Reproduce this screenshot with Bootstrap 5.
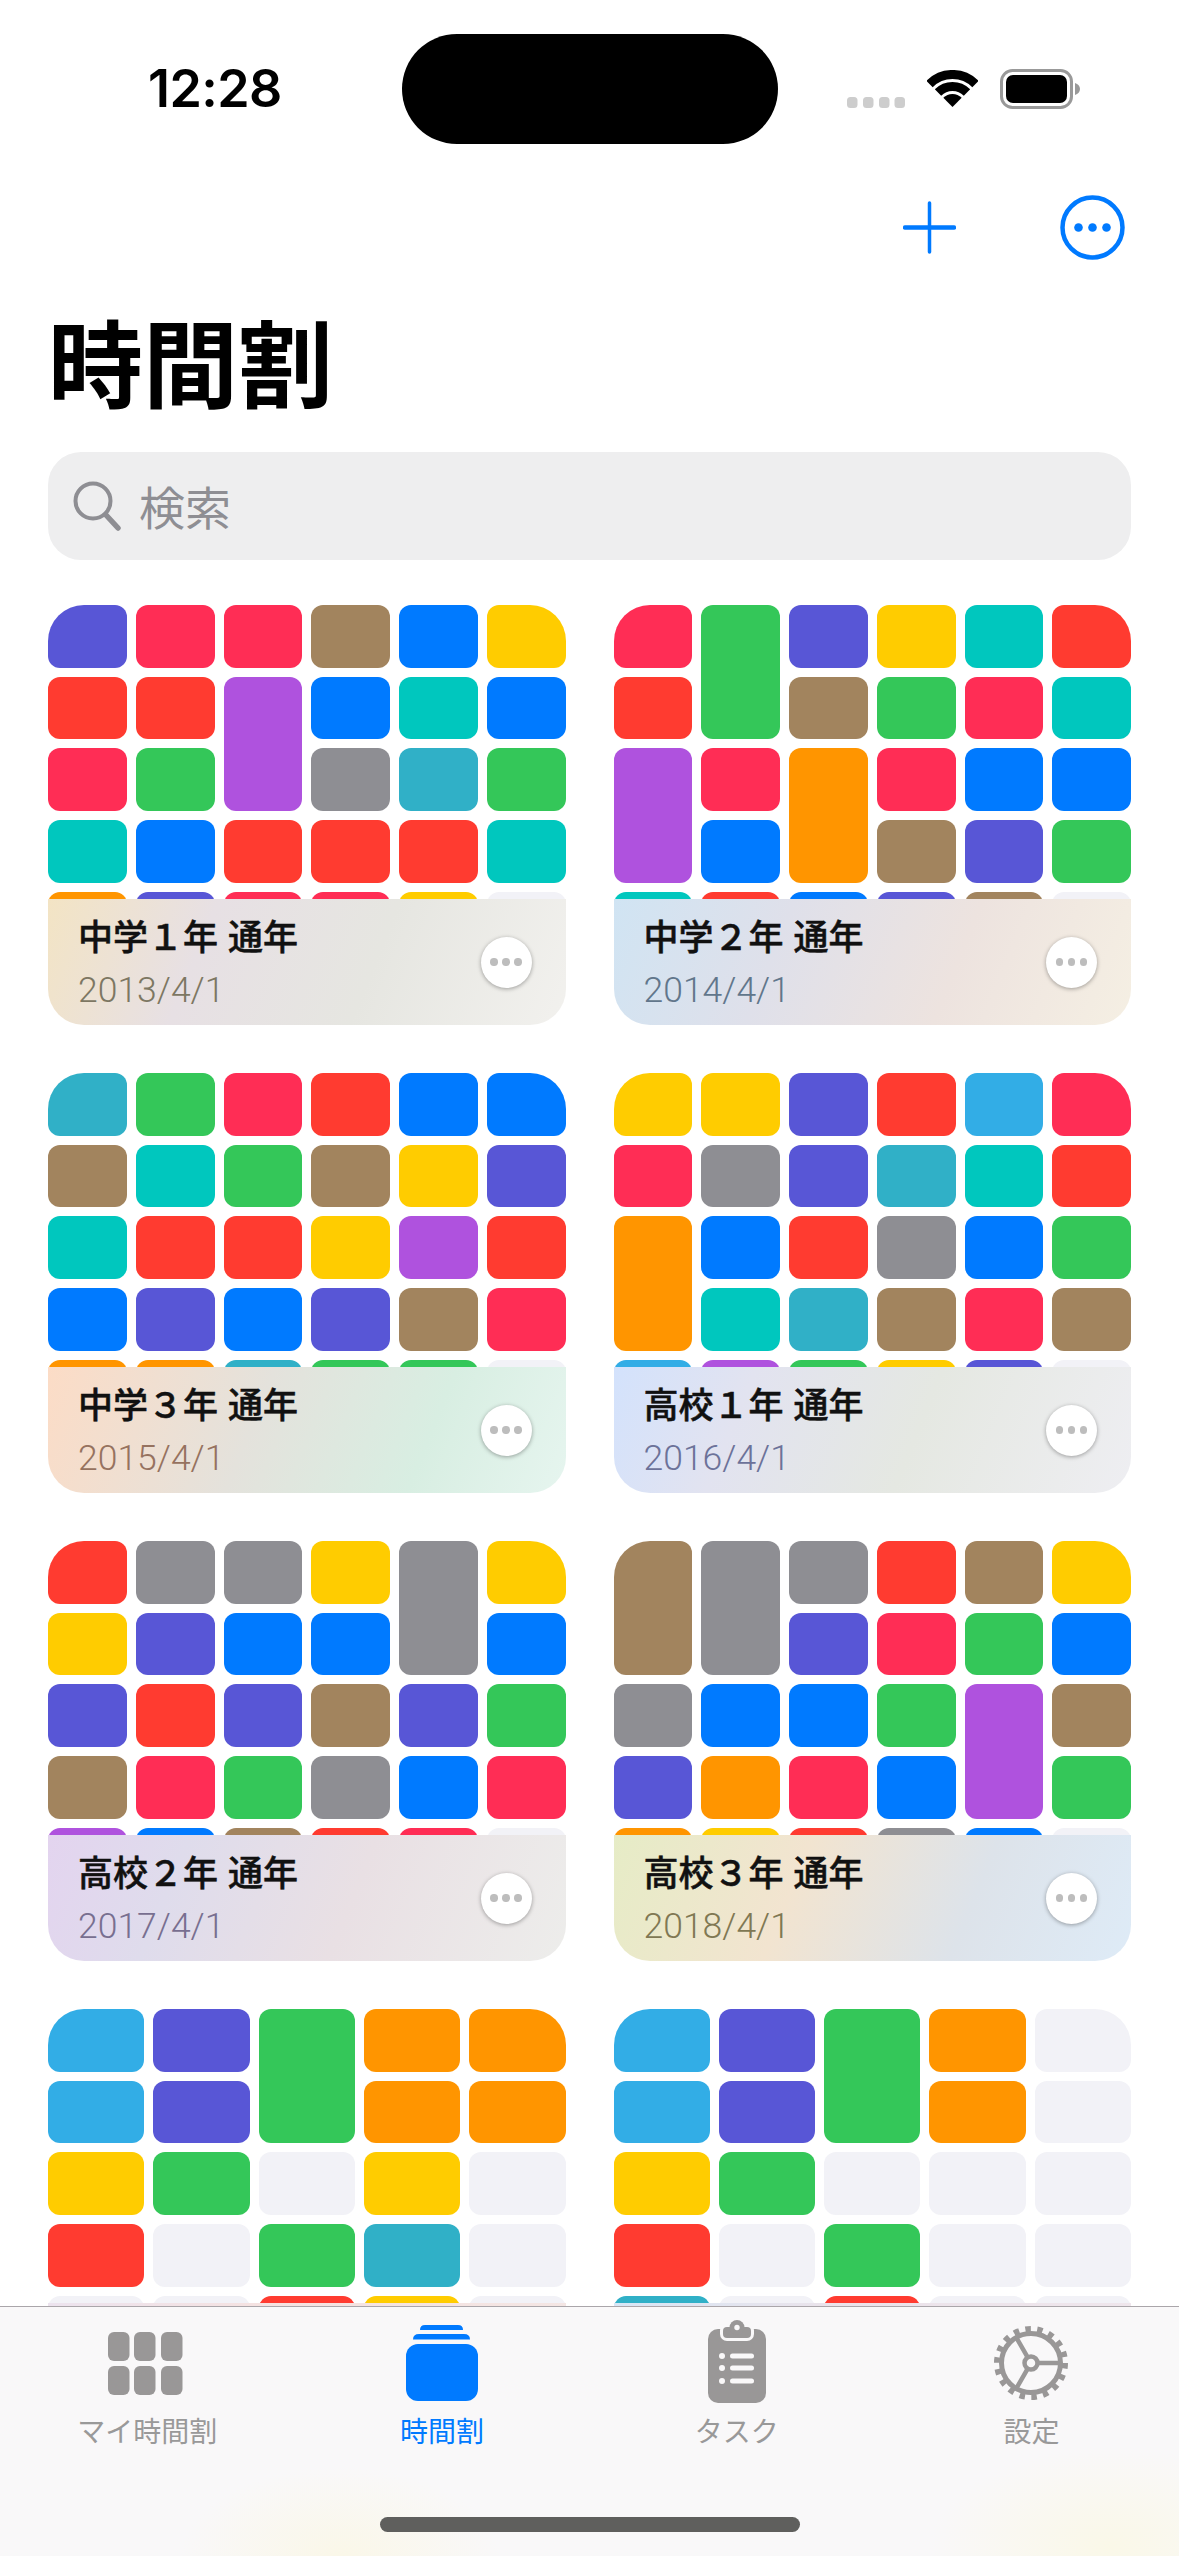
<!DOCTYPE html>
<html lang="ja">
<head>
    <meta charset="UTF-8">
    <meta name="viewport" content="width=device-width, initial-scale=1.0">
    <title>時間割</title>
    <link href="https://cdn.jsdelivr.net/npm/bootstrap@5.3.0/dist/css/bootstrap.min.css" rel="stylesheet">
    <style>
        body { background: #fff; font-family: "Noto Sans CJK JP", "Noto Sans", sans-serif; overflow: hidden; }
        .phone { width: 1179px; height: 2556px; }

        .statusbar { height: 177px; padding: 0 99px 0 148px; }
        .clock { font-family: Inter, Roboto, sans-serif; font-weight: 600; font-size: 52px; line-height: 60px; letter-spacing: -.6px; color: #000; }
        .island { width: 376px; height: 110px; border-radius: 55px; background: #000; margin-left: 120px; margin-top: 1px; }
        .status-icons { gap: 22px; }

        .topnav { height: 100px; padding-right: 54px; gap: 104px; }
        .page-title { font-size: 95px; line-height: 100px; font-weight: 700; color: #000; margin: 33px 0 42px 48px; }

        .searchbox { height: 108px; margin: 0 48px 45px; padding-left: 25px; gap: 18px; border-radius: 33px; background: #eeeeef; color: #8e8e93; font-size: 46px; line-height: 60px; }
        .searchbox span { margin-top: -3px; }

        .deck { height: 420px; border-radius: 36px; overflow: hidden; position: relative; }
        .tiles { display: grid; grid-template-columns: repeat(6, 1fr); grid-auto-rows: 62.7px; gap: 9px; }
        .tiles.five { grid-template-columns: repeat(5, 1fr); }
        .tile { border-radius: 12px; }
        .tall { grid-row: span 2; }

        .c-i { background: #5856d6; } .c-p { background: #ff2d55; } .c-r { background: #ff3b30; }
        .c-b { background: #a2845e; } .c-B { background: #007aff; } .c-y { background: #ffcc00; }
        .c-u { background: #af52de; } .c-t { background: #00c7be; } .c-g { background: #34c759; }
        .c-a { background: #8e8e93; } .c-c { background: #30b0c7; } .c-s { background: #32ade6; }
        .c-o { background: #ff9500; } .c-e { background: #f2f2f7; }

        .sheet { position: absolute; left: 0; right: 0; bottom: 0; height: 126px; padding: 0 34px 0 30px; }
        .sheet-name { font-size: 35px; line-height: 44px; font-weight: 500; color: #111; margin-top: -2px; word-spacing: 2px; -webkit-text-stroke: .5px #111; }
        .sheet-date { font-family: Roboto, sans-serif; font-size: 35.5px; line-height: 40px; font-weight: 300; margin-top: 13px; color: var(--date); }
        .more { width: 51px; height: 51px; background: #fff; box-shadow: 0 1px 4px rgba(0,0,0,.35); gap: 4.6px; flex: none; }
        .more i { width: 7.4px; height: 7.4px; border-radius: 50%; background: #bdbdbd; display: block; }

        .sheen1 { --date: #7d7762; background: linear-gradient(112deg, #f3e4c4 0%, #e7e0e4 30%, #e6e6e1 62%, #f2f1ee 100%); }
        .sheen2 { --date: #61768b; background: linear-gradient(112deg, #d0e4f3 0%, #dfe0ea 32%, #ede3df 65%, #f5efe3 100%); }
        .sheen3 { --date: #96725f; background: linear-gradient(112deg, #fcdcc6 0%, #e4e2dc 40%, #d8eee2 72%, #e6f5ef 100%); }
        .sheen4 { --date: #6c7299; background: linear-gradient(112deg, #d3e2fc 0%, #e2e3f0 25%, #e5e8e2 58%, #eeeef2 100%); }
        .sheen5 { --date: #786f90; background: linear-gradient(112deg, #e3d4ef 0%, #dfdcec 25%, #e9e0e4 58%, #ededeb 100%); }
        .sheen6 { --date: #807853; background: linear-gradient(112deg, #e6ecc6 0%, #f2e4d0 35%, #dde3ea 68%, #deebf7 100%); }
        .sheen7 { background: linear-gradient(112deg, #ece3ee 0%, #f5e2e0 40%, #f3e6e4 100%); }
        .sheen8 { background: linear-gradient(112deg, #d8e6f5 0%, #ebe3ea 40%, #efe6ec 100%); }

        .tabbar {
            height: 250px; flex: none; padding-top: 13px; border-top: 1.5px solid #aaa6aa;
            background:
                radial-gradient(160px 90px at 340px 250px, #faf7e8, transparent),
                radial-gradient(180px 100px at 1110px 240px, #faf8e8, transparent),
                #f9f8f9;
        }
        .tab-label { font-size: 28px; line-height: 30px; margin-top: 10px; color: #999; }
        .tab-on .tab-label { color: #007aff; }
        .home-bar { width: 420px; height: 15px; border-radius: 8px; background: #5f5f5d; margin: 72px auto 0; }
    </style>
</head>
<body>
    <div class="phone d-flex flex-column">
        <main class="flex-grow-1 overflow-hidden">
            <div class="statusbar d-flex align-items-center">
                <div class="clock">12:28</div>
                <div class="island"></div>
                <div class="status-icons d-flex align-items-center ms-auto">
                    <svg width="58" height="38" viewBox="0 0 58 38"><g fill="#cdcdcd"><rect x="0" y="27" width="10.5" height="11" rx="3.5"/><rect x="16" y="27" width="10.5" height="11" rx="3.5"/><rect x="32" y="27" width="10.5" height="11" rx="3.5"/><rect x="47.5" y="27" width="10.5" height="11" rx="3.5"/></g></svg>
                    <svg width="51" height="38" viewBox="0 0 51 38"><g fill="none" stroke="#000" stroke-width="9"><path d="M2.5 14A32.5 32.5 0 0 1 48.500 14"/><path d="M11 22.500A20.500 20.500 0 0 1 40 22.500"/></g><path d="M25.500 37L16.300 27.800A13 13 0 0 1 34.700 27.800Z"/></svg>
                    <svg width="80" height="40" viewBox="0 0 80 40"><rect x="1.500" y="1.500" width="70" height="37" rx="11" fill="#fff" stroke="#999" stroke-width="3"/><rect x="6" y="6" width="61" height="28" rx="7"/><path d="M75 14c3 1 5 3 5 6s-2 5-5 6z" fill="#999"/></svg>
                </div>
            </div>

            <div class="topnav d-flex justify-content-end align-items-center">
                <svg width="53" height="53" viewBox="0 0 53 53" fill="none" stroke="#007aff" stroke-linecap="round"><path d="M26.500 2v49" stroke-width="3.500"/><path d="M2 26.500h49" stroke-width="4.500"/></svg>
                <svg width="65" height="65" viewBox="0 0 65 65"><circle cx="32.500" cy="32.500" r="30" fill="none" stroke="#007aff" stroke-width="4.500"/><g fill="#007aff"><circle cx="18.500" cy="32.500" r="4.300"/><circle cx="32.500" cy="32.500" r="4.300"/><circle cx="46.500" cy="32.500" r="4.300"/></g></svg>
            </div>

            <h1 class="page-title">時間割</h1>

            <div class="searchbox d-flex align-items-center">
                <svg width="48" height="50" viewBox="0 0 48 50" fill="none" stroke="#8e8e93"><circle cx="20" cy="20" r="17.500" stroke-width="4"/><path d="M33 34l12 13" stroke-width="5.500" stroke-linecap="round"/></svg>
                <span>検索</span>
            </div>

            <div class="px-5">
                <div id="decks" class="row row-cols-2 g-5"></div>
            </div>
        </main>

        <nav class="tabbar">
            <div class="row g-0 text-center">
                <div class="col-3 d-flex flex-column align-items-center">
                    <svg width="90" height="85" viewBox="0 0 90 85" fill="#999797"><rect x="6" y="12" width="21.500" height="29" rx="6"/><rect x="32" y="12" width="21.500" height="29" rx="6"/><rect x="59" y="12" width="21.500" height="29" rx="6"/><rect x="6" y="46" width="21.500" height="29" rx="6"/><rect x="32" y="46" width="21.500" height="29" rx="6"/><rect x="59" y="46" width="21.500" height="29" rx="6"/></svg>
                    <div class="tab-label">マイ時間割</div>
                </div>
                <div class="col-3 tab-on d-flex flex-column align-items-center">
                    <svg width="90" height="85" viewBox="0 0 90 85" fill="#007aff"><rect x="9" y="24" width="72" height="57" rx="12"/><path d="M16 19.500q0-5.500 6-5.500h45q6 0 6 5.500z"/><path d="M23 10q0-5 5-5h33q5 0 5 5z"/></svg>
                    <div class="tab-label">時間割</div>
                </div>
                <div class="col-3 d-flex flex-column align-items-center">
                    <svg width="90" height="85" viewBox="0 0 90 85" fill="#999797"><rect x="16" y="9" width="58" height="74" rx="10"/><rect x="28" y="3" width="34" height="18" rx="7" fill="#f9f8f9"/><rect x="31" y="7" width="28" height="11" rx="4"/><circle cx="45" cy="7.500" r="7.500"/><circle cx="45" cy="7.500" r="2.700" fill="#f9f8f9"/><g fill="#f9f8f9"><circle cx="30" cy="36" r="3"/><circle cx="30" cy="48" r="3"/><circle cx="30" cy="61" r="3"/><rect x="38" y="33.500" width="24" height="5" rx="2.500"/><rect x="38" y="45.500" width="24" height="5" rx="2.500"/><rect x="38" y="58.500" width="24" height="5" rx="2.500"/></g></svg>
                    <div class="tab-label">タスク</div>
                </div>
                <div class="col-3 d-flex flex-column align-items-center">
                    <svg width="90" height="85" viewBox="0 0 90 85" fill="none" stroke="#999797"><circle cx="44" cy="43" r="34" stroke-width="6" stroke-dasharray="5.500 6.370"/><circle cx="44" cy="43" r="29.500" stroke-width="5"/><circle cx="44" cy="43" r="6.500" stroke-width="4.500"/><path d="M50.500 43H73M40.700 37.400L29.500 17.900M40.700 48.600L29.500 68.100" stroke-width="4.500"/></svg>
                    <div class="tab-label">設定</div>
                </div>
            </div>
            <div class="home-bar"></div>
        </nav>
    </div>

    <script>
        // 1文字目が色、末尾の2は2コマ続きの授業。下の2枚は見出しがタブバーに隠れる
        const decks = [
            { name: "中学１年 通年", date: "2013/4/1", tiles: "i p p b B y r r u2 B t B p g a c g t B r r r t o i p p y e" },
            { name: "中学２年 通年", date: "2014/4/1", tiles: "p g2 i y t r r b g p t u2 p o2 p B B B b i g t r B i b e" },
            { name: "中学３年 通年", date: "2015/4/1", tiles: "c g p r B B b t g b y i t r r y u r B i B i b p o o c g g e" },
            { name: "高校１年 通年", date: "2016/4/1", tiles: "y y i r s p p a i c t r o2 B r a B g t c b p b s u g y i e" },
            { name: "高校２年 通年", date: "2017/4/1", tiles: "r a a y a2 y y i B B B i r i b i g b p g a B p u B b r p e" },
            { name: "高校３年 通年", date: "2018/4/1", tiles: "b2 a2 a r b y i p g B a B B g u2 b i o p B g o y r a B e" },
            { five: true, tiles: "s i g2 o o s i o o y g e y e r e g c e e e r y e" },
            { five: true, tiles: "s i g2 o e s i o e y g e e e r e g e e c e r e e" }
        ];

        document.getElementById("decks").innerHTML = decks.map((deck, n) => {
            const tiles = deck.tiles.split(" ").map(t =>
                `<div class="tile c-${t[0]}${t[1] ? " tall" : ""}"></div>`).join("");
            const label = deck.name ? `<div>
                            <div class="sheet-name">${deck.name}</div>
                            <div class="sheet-date">${deck.date}</div>
                        </div>
                        <div class="more rounded-circle d-flex justify-content-center align-items-center"><i></i><i></i><i></i></div>` : "";
            return `<div class="col">
                <div class="deck">
                    <div class="tiles${deck.five ? " five" : ""}">${tiles}</div>
                    <div class="sheet sheen${n + 1} d-flex justify-content-between align-items-center">${label}</div>
                </div>
            </div>`;
        }).join("");
    </script>
    <script src="https://cdn.jsdelivr.net/npm/bootstrap@5.3.0/dist/js/bootstrap.bundle.min.js"></script>
</body>
</html>
